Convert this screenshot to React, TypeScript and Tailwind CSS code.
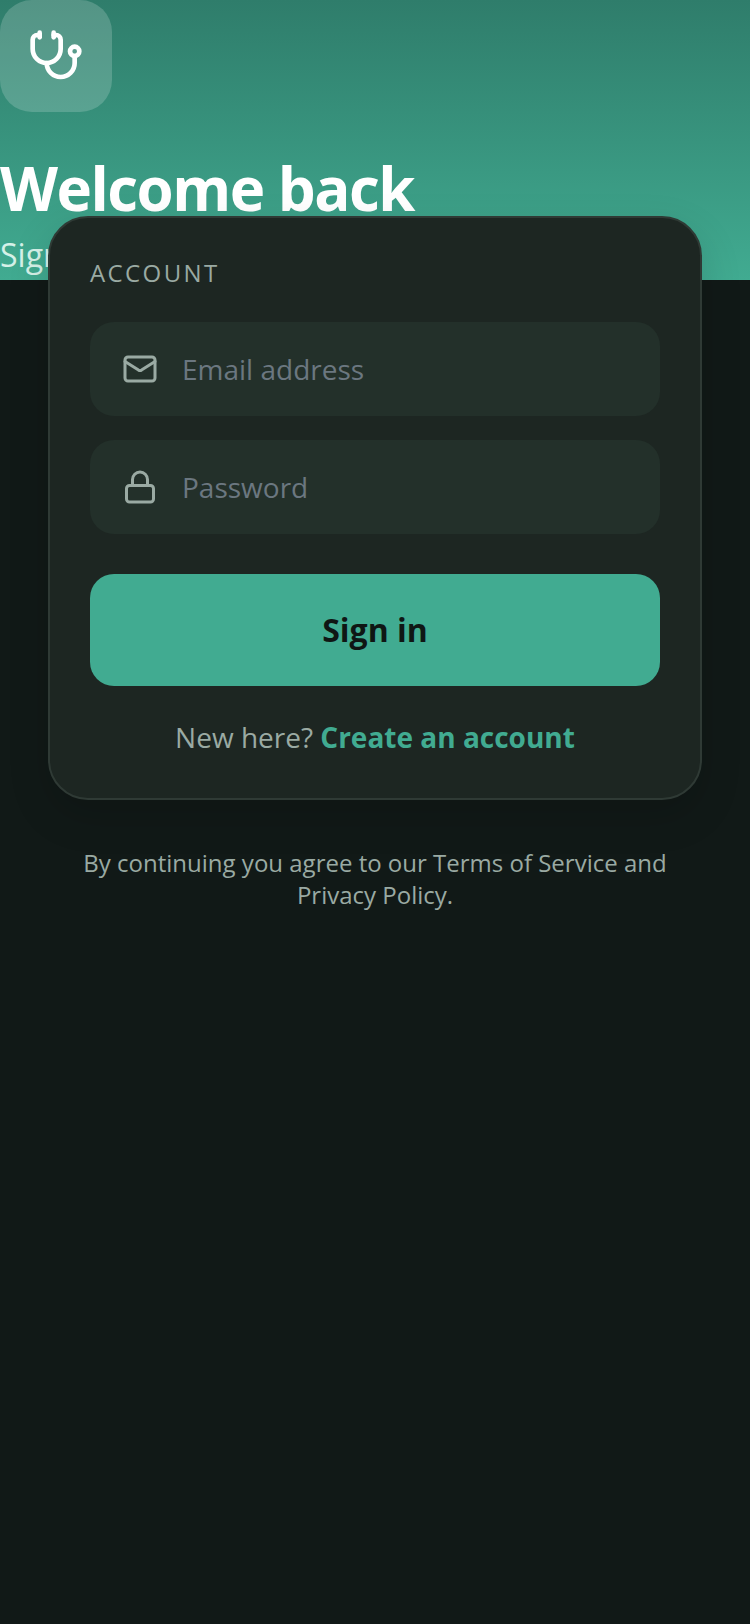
import React from 'react';
import { Lock, Mail, Stethoscope } from 'lucide-react';

const fieldStyle = "flex items-center gap-6 h-[94px] px-8 rounded-3xl bg-[#23302a]";
const inputStyle = "flex-1 min-w-0 bg-transparent outline-none text-[28px] text-white placeholder:text-[#6b7780]";

const App: React.FC = () => {
  return (
    <div className="min-h-[1624px] bg-[#111917] font-['Open_Sans',sans-serif]">
      <header className="h-[280px] bg-gradient-to-b from-[#2f7d6b] to-[#41ab91]">
        <div className="w-28 h-28 rounded-[32px] bg-white/[0.18] flex items-center justify-center">
          <Stethoscope className="w-14 h-14 text-white" strokeWidth={2} />
        </div>
        <h1 className="mt-10 text-[60px] leading-[72px] font-bold text-white tracking-tight whitespace-nowrap">Welcome back</h1>
        <p className="mt-[7px] text-[32px] leading-[48px] text-[#d5f1e8] whitespace-nowrap">Sign in to continue</p>
      </header>

      <main className="relative mx-12 -mt-16 px-10 pt-[39px] pb-10 rounded-[40px] bg-[#1d2622] border-2 border-[#2f3a35] shadow-[0_16px_40px_rgba(0,0,0,0.15)]">
        <div className="text-2xl leading-8 tracking-[2.4px] text-[#9aaaa3]">ACCOUNT</div>
        <div className="mt-[33px] flex flex-col gap-6">
          <label className={fieldStyle}>
            <Mail className="w-9 h-9 shrink-0 text-[#9aaaa3]" strokeWidth={2} />
            <input type="email" placeholder="Email address" className={inputStyle} />
          </label>
          <label className={fieldStyle}>
            <Lock className="w-9 h-9 shrink-0 text-[#9aaaa3]" strokeWidth={2} />
            <input type="password" placeholder="Password" className={inputStyle} />
          </label>
        </div>
        <button className="mt-10 w-full h-28 rounded-3xl bg-[#41ab91] text-[32px] font-bold text-[#0f1614]">Sign in</button>
        <p className="mt-[30px] text-center text-[28px] leading-[42px] text-[#9aaaa3]">
          New here? <span className="font-bold text-[#41ab91]">Create an account</span>
        </p>
      </main>

      <p className="mt-[47px] px-20 text-center text-2xl leading-8 text-[#9aaaa3]">
        By continuing you agree to our Terms of Service and Privacy Policy.
      </p>
    </div>
  );
};

export default App;
